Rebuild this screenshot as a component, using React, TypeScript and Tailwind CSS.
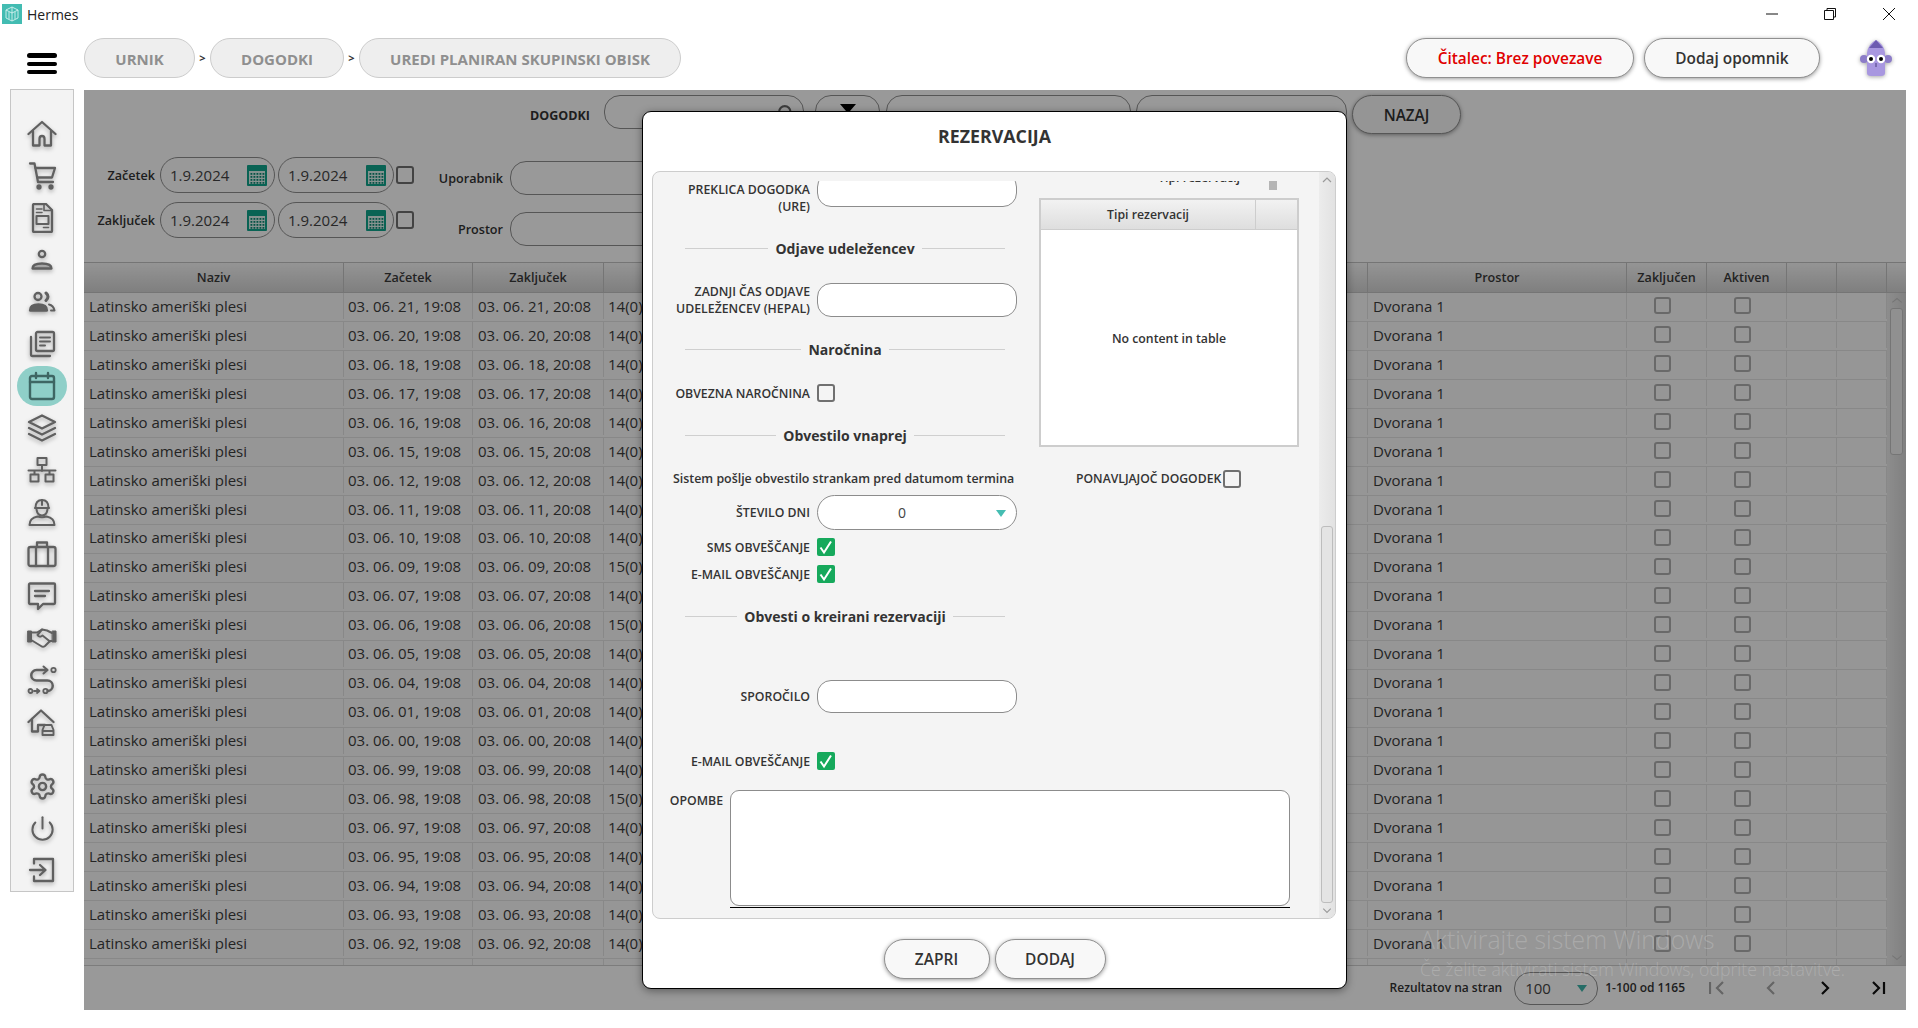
import React from 'react'
import { Power, Search, Settings } from 'lucide-react'

const rows = ['21', '20', '18', '17', '16', '15', '12', '11', '10', '09', '07', '06', '05', '04', '01', '00', '99', '98', '97', '95', '94', '93', '92']
const fifteen = ['09', '06', '98']

const Ico = ({ children }: { children: React.ReactNode }) => (
  <svg viewBox="0 0 30 30" className="w-[30px] h-[30px] drop-shadow-[0_2px_2px_rgba(0,0,0,0.3)]" fill="none" stroke="#606060" strokeWidth="2.3" strokeLinecap="round" strokeLinejoin="round">
    {children}
  </svg>
)

const navIcons = [
  <Ico><path d="M1.5 15 15 3l13.500 12" /><path d="M6 12v14.500h6.500V20q0-3 2.500-3t2.500 3v6.500H24V12" /></Ico>,
  <Ico><path d="M3 2.500h4.500L11 21h15" /><path d="M8.500 7H28l-3 9.500H10.500" /><circle cx="12" cy="26" r="1.500" fill="#606060" /><circle cx="24" cy="26" r="1.500" fill="#606060" /></Ico>,
  <Ico><path d="M7 1h12l6 6v21a1 1 0 0 1-1 1H7a1 1 0 0 1-1-1V2a1 1 0 0 1 1-1Z" /><path d="M9.500 6H15M9.500 9.500H15M17 1.500 V7.500H25" strokeWidth="1.600" /><rect x="9.500" y="13" width="12" height="8" strokeWidth="2" /><path d="M16.500 24.500h5" strokeWidth="1.600" /></Ico>,
  <Ico><circle cx="15" cy="9" r="3.200" /><path d="M5.500 23.500q0-5 9.500-5t9.500 5Z" fill="#606060" fillOpacity="0.35" /></Ico>,
  <Ico><circle cx="11" cy="9.500" r="3.500" /><path d="M19 6q4 3.500 0 7.500" strokeWidth="3" /><path d="M3 23.500q0-6 8.500-6t8.500 6Z" fill="#606060" /><path d="M22 17.500q4.500 1 5.500 6h-3.500" strokeWidth="2" /></Ico>,
  <Ico><rect x="9" y="3" width="18" height="19" rx="1.500" /><path d="M13 8.500h10M13 12.500h10M13 16.500h5" strokeWidth="2" /><path d="M4 8v17.500a1.500 1.500 0 0 0 1.500 1.500H23" /></Ico>,
]

const navIcons2 = [
  <Ico><path d="M2 9 15 2.500 28 9 15 15.500Z" /><path d="M2 15l13 6.500L28 15" /><path d="M2 21l13 6.500L28 21" /></Ico>,
  <Ico><rect x="10.500" y="3" width="9" height="7" strokeWidth="2" /><path d="M15 10v6M1.500 15.500h27M7.500 15.500v3.500M22.500 15.500v3.500" strokeWidth="2" /><rect x="3.500" y="19.500" width="8" height="7" strokeWidth="2" /><rect x="18.500" y="19.500" width="8" height="7" strokeWidth="2" /></Ico>,
  <Ico><path d="M8.500 11q0-8 6.500-8t6.500 8" strokeWidth="2" /><path d="M8 11h14M15 3v5" strokeWidth="2" /><path d="M9.500 12.500q1 6 5.500 6t5.500-6" strokeWidth="2" /><path d="M2.500 28q0-7 8-8.500 4.500 1.500 9 0 8 1.500 8 8.500Z" strokeWidth="2" /></Ico>,
  <Ico><rect x="1.500" y="8" width="27" height="19" rx="2" /><path d="M10 8V3.500h10V8M9 8v19M21 8v19" /></Ico>,
  <Ico><path d="M3 2.500h24a1 1 0 0 1 1 1V22a1 1 0 0 1-1 1H16l-5 5v-5H3a1 1 0 0 1-1-1V3.500a1 1 0 0 1 1-1Z" /><path d="M8 10h14M8 15h10" /></Ico>,
  <Ico>
    <path d="M1 8h3.500v11H1ZM25.500 8H29v11h-3.500Z" fill="#606060" strokeWidth="1" />
    <path d="M5 9.500h5l5-3 5 1 5 2.500" strokeWidth="2" />
    <path d="M15 6.500 10.500 12q2 3 5 .5l7.500 6" strokeWidth="2" />
    <path d="M25 18h-2l-5 5q-2 1.500-4 0L5 17.500" strokeWidth="2" />
  </Ico>,
  <Ico><path d="M20 5H9.500a5 5 0 0 0 0 10.500h11a5 5 0 0 1 0 10.500" strokeWidth="2.500" /><path d="m16.500 1.500 4 3.500-4 3.500" strokeWidth="2" /><circle cx="26.500" cy="5" r="2.200" strokeWidth="1.800" /><circle cx="18.500" cy="26" r="2.200" strokeWidth="1.800" /><circle cx="3.500" cy="26" r="2" strokeWidth="1.800" /><path d="M7 26h5m-2-2 2.500 2-2.500 2" strokeWidth="1.800" /></Ico>,
  <Ico><path d="M1.500 15 14 3.500 26.500 15" /><path d="M5 12v12.500h6V18h7" /><path d="M15.500 28v-5l2-5h7l2 5v5ZM15.500 24h11" strokeWidth="1.900" /></Ico>,
]

const Calendar = () => (
  <svg viewBox="0 0 20 22" className="w-[20px] h-[22px]">
    <rect x="0" y="1" width="20" height="21" rx="1" fill="#10a58c" />
    <rect x="2" y="7" width="16" height="13" fill="#dff3ef" />
    {[3.500, 6.500, 9.500, 12.500, 15.500].map((x) =>
      [9, 12, 15, 18].map((y) => <rect key={`${x}-${y}`} x={x} y={y} width="1.800" height="1.800" fill="#0c8a75" />)
    )}
  </svg>
)

const Check = ({ on = false, small = false }: { on?: boolean; small?: boolean }) =>
  on ? (
    <span className="w-[18px] h-[18px] shrink-0 rounded-[2px] bg-[#16a95c] flex items-center justify-center">
      <svg viewBox="0 0 18 18" className="w-[18px] h-[18px]" fill="none" stroke="#fff" strokeWidth="2"><path d="m3.500 9.500 3.500 5 7-11" /></svg>
    </span>
  ) : (
    <span className={small ? 'block w-[17px] h-[17px] shrink-0 rounded-[3px] border-2 border-[#b0b0b0]' : 'block w-[18px] h-[18px] shrink-0 rounded-[3px] border-2 border-[#707070]'} />
  )

const Pill = ({ className, children }: { className: string; children: React.ReactNode }) => (
  <div className={`flex items-center justify-center rounded-[20px] border border-[#909090] bg-[#f8f8f8] shadow-[0_1px_4px_rgba(0,0,0,0.4)] font-semibold whitespace-nowrap ${className}`}>
    {children}
  </div>
)

const DateField = ({ width }: { width: string }) => (
  <div className={`${width} h-[36px] rounded-[18px] border border-[#909090] flex items-center justify-between pl-[9px] pr-[7px]`}>
    <span className="text-[15px] text-[#444]">1.9.2024</span>
    <Calendar />
  </div>
)

const Sep = ({ label }: { label: string }) => (
  <div className="ml-[32px] w-[320px] h-[20px] flex items-center gap-[7px]">
    <div className="flex-1 h-px bg-[#cfcfcf]" />
    <span className="text-[14px] font-bold text-[#333] whitespace-nowrap">{label}</span>
    <div className="flex-1 h-px bg-[#cfcfcf]" />
  </div>
)

const Field = ({ className = '', children }: { className?: string; children?: React.ReactNode }) => (
  <div className={`ml-[7px] w-[200px] shrink-0 rounded-[14px] border border-[#8c8c8c] bg-white ${className}`}>{children}</div>
)

const Label = ({ children }: { children: React.ReactNode }) => (
  <div className="w-[157px] shrink-0 text-right text-[12.300px] leading-[17px] font-semibold text-[#333] whitespace-nowrap">{children}</div>
)

const CheckRow = ({ label, className }: { label: string; className: string }) => (
  <div className={`flex items-center h-[18px] ${className}`}>
    <Label>{label}</Label>
    <div className="ml-[7px]"><Check on /></div>
  </div>
)

const Modal = () => (
  <div className="absolute left-[558px] top-[21px] w-[705px] h-[878px] rounded-[9px] border border-black bg-white flex flex-col shadow-[0_2px_8px_rgba(0,0,0,0.4)]">
    <div className="h-[59px] shrink-0 pb-[10px] flex items-center justify-center text-[17.800px] font-bold text-[#333]">REZERVACIJA</div>
    <div className="ml-[9px] mr-[10px] h-[748px] shrink-0 rounded-[8px] border border-[#cdcdcd] bg-[#f4f4f4] flex overflow-hidden">
      <div className="flex-1 min-w-0 mt-[9px] h-[735px] overflow-hidden">
        <div className="-mt-[8px]">
          <div className="flex">
            <div className="w-[363px] shrink-0">
              <div className="flex items-start h-[34px]">
                <div className="pt-[8px]"><Label>PREKLICA DOGODKA<br />(URE)</Label></div>
                <Field className="h-[34px]" />
              </div>
              <div className="mt-[31px]"><Sep label="Odjave udeležencev" /></div>
              <div className="mt-[25px] flex items-center h-[34px]">
                <Label>ZADNJI ČAS ODJAVE<br />UDELEŽENCEV (HEPAL)</Label>
                <Field className="h-[34px]" />
              </div>
              <div className="mt-[22px]"><Sep label="Naročnina" /></div>
              <div className="mt-[25px] flex items-center h-[18px]">
                <Label>OBVEZNA NAROČNINA</Label>
                <div className="ml-[7px]"><Check /></div>
              </div>
              <div className="mt-[23px]"><Sep label="Obvestilo vnaprej" /></div>
              <div className="mt-[25px] h-[18px] pl-[20px] text-[12.400px] leading-[18px] font-semibold text-[#333] whitespace-nowrap">Sistem pošlje obvestilo strankam pred datumom termina</div>
              <div className="mt-[7px] flex items-center h-[35px]">
                <Label>ŠTEVILO DNI</Label>
                <Field className="h-[35px] rounded-[18px] pr-[30px] flex items-center justify-center relative text-[14px] text-[#444]">
                  0
                  <span className="absolute right-[10px] top-[14px] w-0 h-0 border-x-[5px] border-x-transparent border-t-[7px] border-t-[#45bdb2]" />
                </Field>
              </div>
              <CheckRow label="SMS OBVEŠČANJE" className="mt-[8px]" />
              <CheckRow label="E-MAIL OBVEŠČANJE" className="mt-[9px]" />
              <div className="mt-[23px]"><Sep label="Obvesti o kreirani rezervaciji" /></div>
              <div className="mt-[54px] flex items-center h-[33px]">
                <Label>SPOROČILO</Label>
                <Field className="h-[33px]" />
              </div>
              <CheckRow label="E-MAIL OBVEŠČANJE" className="mt-[39px]" />
            </div>
            <div className="ml-[23px] w-[260px] shrink-0">
              <div className="h-[25px] flex items-start">
                <div className="ml-[119px] -mt-[4px] text-[12.300px] leading-[17px] font-semibold text-[#333] whitespace-nowrap">Tipi rezervacij</div>
                <div className="ml-[29px] w-[8px] h-[17px] bg-[#b5b5b5]" />
              </div>
              <div className="h-[249px] border-2 border-[#cdcdcd] bg-white flex flex-col">
                <div className="h-[30px] shrink-0 flex bg-gradient-to-b from-[#f2f2f2] to-[#dedede] border-b border-[#cdcdcd]">
                  <div className="w-[215px] pt-[2px] border-r border-[#cdcdcd] flex items-center justify-center text-[12.300px] font-semibold text-[#333]">Tipi rezervacij</div>
                  <div className="flex-1" />
                </div>
                <div className="flex-1 pt-[3px] flex items-center justify-center text-[12.300px] font-semibold text-[#333]">No content in table</div>
              </div>
              <div className="mt-[24px] ml-[37px] h-[16px] flex items-center gap-[2px]">
                <span className="text-[12.200px] font-semibold text-[#333] whitespace-nowrap">PONAVLJAJOČ DOGODEK</span>
                <Check />
              </div>
            </div>
          </div>
          <div className="mt-[20px] flex items-start">
            <div className="w-[70px] shrink-0 pt-[2px] text-right text-[12.300px] leading-[17px] font-semibold text-[#333]">OPOMBE</div>
            <div className="ml-[7px] w-[560px]">
              <div className="h-[116px] rounded-[9px] border border-[#8c8c8c] bg-white" />
              <div className="mt-px h-px bg-black" />
            </div>
          </div>
        </div>
      </div>
      <div className="w-[16px] shrink-0 bg-gradient-to-r from-[#ececec] to-[#e2e2e2] flex flex-col items-center">
        <svg viewBox="0 0 16 16" className="w-[16px] h-[16px] shrink-0" fill="none" stroke="#9a9a9a" strokeWidth="1.200"><path d="m4 10 4-4 4 4" /></svg>
        <div className="mt-[338px] w-[12px] h-[377px] shrink-0 rounded-[3px] border border-[#bdbdbd] bg-[#e4e4e4]" />
        <svg viewBox="0 0 16 16" className="w-[16px] h-[15px] shrink-0" fill="none" stroke="#9a9a9a" strokeWidth="1.200"><path d="m4 6 4 4 4-4" /></svg>
      </div>
    </div>
    <div className="mt-[20px] flex justify-center gap-[5px] text-[15.500px] text-[#333] font-bold">
      <Pill className="w-[106px] h-[40px] pt-[2px]">ZAPRI</Pill>
      <Pill className="w-[111px] h-[40px] pt-[2px]">DODAJ</Pill>
    </div>
  </div>
)

const Cell = ({ width, children, className = '' }: { width: string; children?: React.ReactNode; className?: string }) => (
  <div className={`${width} shrink-0 border-r border-[#e3e3e3] flex items-center overflow-hidden whitespace-nowrap ${className}`}>{children}</div>
)

const HeadCell = ({ width, children }: { width: string; children?: React.ReactNode }) => (
  <div className={`${width} shrink-0 pt-[2px] border-r border-[#c4c4c4] flex items-center justify-center text-[12.600px] font-semibold text-[#3a3a3a]`}>{children}</div>
)

const Row = ({ id }: { id?: string }) => (
  <div className="h-[28.970px] shrink-0 pb-[2px] flex border-b border-[#e3e3e3] bg-[#fafafa] text-[15px] text-[#3c3c3c]">
    <Cell width="w-[260px]" className="pl-[5px]">{id && 'Latinsko ameriški plesi'}</Cell>
    <Cell width="w-[129px]" className="pl-[4px]">{id && `03. 06. ${id}, 19:08`}</Cell>
    <Cell width="w-[131px]" className="pl-[5px]">{id && `03. 06. ${id}, 20:08`}</Cell>
    <Cell width="w-[764px]" className="pl-[4px]">{id && (fifteen.includes(id) ? '15(0)' : '14(0)')}</Cell>
    <Cell width="w-[259px]" className="pl-[5px]">{id && 'Dvorana 1'}</Cell>
    <Cell width="w-[80px]" className="justify-center pr-[8px]">{id && <Check small />}</Cell>
    <Cell width="w-[80px]" className="justify-center pr-[8px]">{id && <Check small />}</Cell>
    <Cell width="w-[50px]" />
    <Cell width="w-[50px]" />
  </div>
)

const Pager = ({ d, color }: { d: string; color: string }) => (
  <div className="w-[54px] flex justify-center">
    <svg viewBox="0 0 16 16" className="w-[16px] h-[16px]" fill="none" stroke={color} strokeWidth="2.200"><path d={d} /></svg>
  </div>
)

export default function App() {
  return (
    <div className="w-[1918px] h-[1028px] overflow-hidden bg-white font-['Open_Sans',sans-serif] flex flex-col">
      {/* window title bar */}
      <div className="h-[30px] shrink-0 pb-[2px] flex items-center">
        <div className="ml-[2px] w-[20px] h-[20px] bg-[#43bcb2] flex items-center justify-center">
          <svg viewBox="0 0 20 20" className="w-[20px] h-[20px]" fill="none" stroke="#d5f2ef" strokeWidth="0.900"><path d="m10 3 6 3v8l-6 3-6-3V6Zm0 0v14M4 6l6 3 6-3M7 8v7M13 8v7" /></svg>
        </div>
        <span className="ml-[5px] text-[14px] text-[#222]">Hermes</span>
        <div className="ml-auto flex items-center">
          <svg viewBox="0 0 14 14" className="w-[14px] h-[14px]" fill="none" stroke="#111" strokeWidth="1"><path d="M1 7h12" /></svg>
          <svg viewBox="0 0 14 14" className="ml-[44px] w-[14px] h-[14px]" fill="none" stroke="#111" strokeWidth="1"><path d="M1.500 3.500h9v9h-9zM4 3.500V1.500h8.500v8.500h-2" /></svg>
          <svg viewBox="0 0 14 14" className="ml-[45px] mr-[22px] w-[14px] h-[14px]" fill="none" stroke="#111" strokeWidth="1"><path d="m1 1 12 12M13 1 1 13" /></svg>
        </div>
      </div>

      {/* breadcrumb bar */}
      <div className="h-[60px] shrink-0 pt-[8px] flex items-start">
        <div className="ml-[27px] mt-[15px] w-[30px] flex flex-col gap-[4px]">
          <div className="h-[5px] rounded-full bg-black" />
          <div className="h-[4px] rounded-full bg-black" />
          <div className="h-[4px] rounded-full bg-black" />
        </div>
        <div className="ml-[27px] flex items-center text-[15px] font-bold text-[#8f8f8f]">
          <div className="w-[111px] h-[40px] pt-[2px] rounded-[20px] border border-[#cccccc] bg-[#eeeeee] flex items-center justify-center">URNIK</div>
          <span className="w-[15px] text-center text-[11px] text-[#333]">&gt;</span>
          <div className="w-[134px] h-[40px] pt-[2px] rounded-[20px] border border-[#cccccc] bg-[#eeeeee] flex items-center justify-center">DOGODKI</div>
          <span className="w-[15px] text-center text-[11px] text-[#333]">&gt;</span>
          <div className="w-[322px] h-[40px] pt-[2px] rounded-[20px] border border-[#cccccc] bg-[#eeeeee] flex items-center justify-center">UREDI PLANIRAN SKUPINSKI OBISK</div>
        </div>
        <div className="ml-auto flex items-center gap-[10px] text-[15.400px]">
          <Pill className="w-[228px] h-[40px] pt-[2px] text-[#e00000] font-bold">Čitalec: Brez povezave</Pill>
          <Pill className="w-[176px] h-[40px] pt-[2px] text-[#333] font-bold">Dodaj opomnik</Pill>
        </div>
        <svg viewBox="0 0 32 38" className="ml-[40px] mr-[26px] w-[32px] h-[38px] mt-[1px] drop-shadow-[0_1px_2px_rgba(0,0,0,0.35)]">
          <circle cx="4" cy="20" r="4" fill="#8c7cc8" />
          <circle cx="28" cy="20" r="4" fill="#8c7cc8" />
          <path d="M7 14Q8 5 16 1q8 4 9 13v20q0 3-4 3H11q-4 0-4-3Z" fill="#a897e0" />
          <path d="M9 9 16 1l7 8Z" fill="#6d5bb0" />
          <circle cx="11" cy="20" r="4.200" fill="#fff" />
          <circle cx="21" cy="20" r="4.200" fill="#fff" />
          <circle cx="11" cy="20" r="2" fill="#000" />
          <circle cx="21" cy="20" r="2" fill="#000" />
          <path d="M16 24v4" stroke="#4a3d80" strokeWidth="1" />
        </svg>
      </div>

      <div className="flex-1 flex items-start">
        {/* side nav */}
        <div className="ml-[10px] -mt-px w-[64px] h-[803px] shrink-0 border border-[#c6c6c6] bg-[#f3f3f3] pt-[23px] flex flex-col items-center">
          {navIcons.map((icon, i) => (
            <div key={i} className="h-[42px] shrink-0 flex items-center justify-center">{icon}</div>
          ))}
          <div className="h-[42px] shrink-0 flex items-center justify-center">
            <div className="w-[50px] h-[40px] rounded-full bg-[#8fcfc8] flex items-center justify-center">
              <svg viewBox="0 0 30 30" className="w-[30px] h-[30px]" fill="none" stroke="#3e6663" strokeWidth="2.400" strokeLinecap="round" strokeLinejoin="round"><rect x="3" y="5" width="24" height="23" rx="2" /><path d="M3 11h24M9 2v5M21 2v5" /></svg>
            </div>
          </div>
          {navIcons2.map((icon, i) => (
            <div key={i} className="h-[42px] shrink-0 flex items-center justify-center">{icon}</div>
          ))}
          <div className="mt-[22px] h-[42px] shrink-0 flex items-center justify-center">
            <Settings size={29} color="#606060" strokeWidth={2} className="drop-shadow-[0_2px_2px_rgba(0,0,0,0.3)]" />
          </div>
          <div className="h-[42px] shrink-0 flex items-center justify-center">
            <Power size={27} color="#606060" strokeWidth={1.800} className="drop-shadow-[0_2px_2px_rgba(0,0,0,0.3)]" />
          </div>
          <div className="h-[42px] shrink-0 flex items-center justify-center">
            <Ico><path d="M7 8.500V4h19v22H7v-4.500" /><path d="M3 15h15m-5-5 5.500 5-5.500 5" /></Ico>
          </div>
        </div>

        {/* main area */}
        <div className="ml-[10px] w-[1822px] h-[920px] shrink-0 relative bg-white flex flex-col">
          <div className="h-[172px] shrink-0 pt-[5px] text-[#333]">
            <div className="flex items-start h-[62px]">
              <div className="ml-[446px] mt-[4px] w-[74px] h-[34px] flex items-center text-[12.500px] font-bold">DOGODKI</div>
              <div className="w-[200px] h-[34px] rounded-[16px] border border-[#909090] flex items-center justify-end pr-[9px]">
                <Search size={17} color="#666" strokeWidth={3} />
              </div>
              <div className="ml-[11px] w-[65px] h-[34px] rounded-[16px] border border-[#909090] flex items-center justify-center">
                <svg viewBox="0 0 16 16" className="w-[18px] h-[16px]" fill="#000"><path d="M0 0h16l-6 7v8H6V7Z" /></svg>
              </div>
              <div className="ml-[6px] w-[245px] h-[34px] rounded-[16px] border border-[#909090]" />
              <div className="ml-[5px] w-[211px] h-[34px] rounded-[16px] border border-[#909090]" />
              <Pill className="ml-[5px] w-[109px] h-[39px] pt-[2px] text-[15.300px] font-bold">NAZAJ</Pill>
            </div>
            <div className="flex items-start">
              <div className="flex flex-col gap-[9px]">
                {['Začetek', 'Zaključek'].map((label) => (
                  <div key={label} className="flex items-center">
                    <div className="w-[71px] pt-[2px] text-right text-[12.600px] font-semibold">{label}</div>
                    <div className="ml-[5px] flex gap-[3px]">
                      <DateField width="w-[115px]" />
                      <DateField width="w-[116px]" />
                    </div>
                    <div className="ml-[2px]"><Check /></div>
                  </div>
                ))}
              </div>
              <div className="mt-[4px] flex flex-col gap-[17px]">
                {['Uporabnik', 'Prostor'].map((label) => (
                  <div key={label} className="flex items-center">
                    <div className="w-[89px] pt-[2px] text-right text-[12.600px] font-semibold">{label}</div>
                    <div className="ml-[7px] w-[250px] h-[34px] rounded-[16px] border border-[#909090]" />
                  </div>
                ))}
              </div>
            </div>
          </div>

          {/* table */}
          <div className="h-[31px] shrink-0 flex bg-gradient-to-b from-[#f8f8f8] to-[#d4d4d4] border-y border-[#c4c4c4]">
            <HeadCell width="w-[260px]">Naziv</HeadCell>
            <HeadCell width="w-[129px]">Začetek</HeadCell>
            <HeadCell width="w-[131px]">Zaključek</HeadCell>
            <HeadCell width="w-[764px]" />
            <HeadCell width="w-[259px]">Prostor</HeadCell>
            <HeadCell width="w-[80px]">Zaključen</HeadCell>
            <HeadCell width="w-[80px]">Aktiven</HeadCell>
            <HeadCell width="w-[50px]" />
            <HeadCell width="w-[50px]" />
            <div className="flex-1" />
          </div>
          <div className="h-[673px] shrink-0 flex overflow-hidden border-b border-[#cfcfcf]">
            <div className="w-[1803px] shrink-0 flex flex-col">
              {rows.map((id) => <Row key={id} id={id} />)}
              <Row />
            </div>
            <div className="flex-1 bg-gradient-to-r from-[#ebebeb] to-[#d6d6d6] flex flex-col items-center">
              <svg viewBox="0 0 16 16" className="w-[16px] h-[15px] shrink-0" fill="none" stroke="#c4c4c4" strokeWidth="1.300"><path d="m3 10 5-4 5 4" /></svg>
              <div className="w-[13px] h-[147px] shrink-0 rounded-[3px] border border-[#c4c4c4] bg-[#f0f0f0]" />
              <svg viewBox="0 0 16 16" className="mt-auto w-[16px] h-[15px] shrink-0" fill="none" stroke="#c4c4c4" strokeWidth="1.300"><path d="m3 6 5 4 5-4" /></svg>
            </div>
          </div>
          <div className="flex-1 bg-white flex items-center justify-end text-[12px] font-semibold text-[#333]">
            <span className="whitespace-nowrap">Rezultatov na stran</span>
            <div className="ml-[12px] w-[84px] h-[33px] rounded-[16px] border border-[#909090] flex items-center justify-between pl-[10px] pr-[10px] text-[15px] font-normal text-[#444]">
              100
              <span className="w-0 h-0 border-x-[5px] border-x-transparent border-t-[7px] border-t-[#3fb5aa]" />
            </div>
            <span className="ml-[7px] mr-[5px] whitespace-nowrap">1-100 od 1165</span>
            <Pager d="M1 2v12M14 2 8 8l6 6" color="#a8a8a8" />
            <Pager d="M11 2 5 8l6 6" color="#a8a8a8" />
            <Pager d="m5 2 6 6-6 6" color="#111" />
            <Pager d="M13 2v12M2 2l6 6-6 6" color="#111" />
          </div>

          {/* dims everything under the dialog */}
          <div className="absolute inset-0 bg-black/40" />
          <Modal />
          <div className="absolute left-[1336px] top-[833px] font-light text-white/20 whitespace-nowrap">
            <div className="text-[24.800px] leading-[32px]">Aktivirajte sistem Windows</div>
            <div className="mt-[3px] text-[17.700px] leading-[22px]">Če želite aktivirati sistem Windows, odprite nastavitve.</div>
          </div>
        </div>
      </div>
    </div>
  )
}
